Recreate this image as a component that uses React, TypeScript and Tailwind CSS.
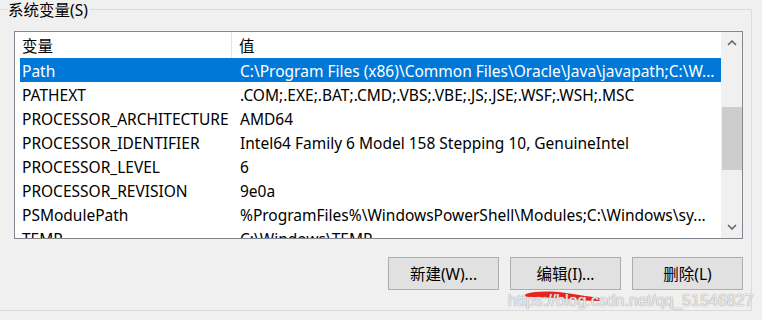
const rows: [string, string][] = [
  ["Path", "C:\\Program Files (x86)\\Common Files\\Oracle\\Java\\javapath;C:\\W..."],
  ["PATHEXT", ".COM;.EXE;.BAT;.CMD;.VBS;.VBE;.JS;.JSE;.WSF;.WSH;.MSC"],
  ["PROCESSOR_ARCHITECTURE", "AMD64"],
  ["PROCESSOR_IDENTIFIER", "Intel64 Family 6 Model 158 Stepping 10, GenuineIntel"],
  ["PROCESSOR_LEVEL", "6"],
  ["PROCESSOR_REVISION", "9e0a"],
  ["PSModulePath", "%ProgramFiles%\\WindowsPowerShell\\Modules;C:\\Windows\\sy..."],
  ["TEMP", "C:\\Windows\\TEMP"],
];

const font = { fontFamily: '"Noto Sans", "Noto Sans CJK SC", sans-serif' };

const Chevron = ({ up }: { up?: boolean }) => (
  <svg width="10" height="6" viewBox="0 0 10 6" className="text-[#606060]">
    <path d={up ? "M1 5 L5 1 L9 5" : "M1 1 L5 5 L9 1"} fill="none" stroke="currentColor" strokeWidth="1.5" />
  </svg>
);

const Button = ({ label }: { label: string }) => (
  <div className="w-[111px] h-[33px] pt-[3px] flex items-center justify-center bg-[#e1e1e1] border border-[#adadad] text-[15.5px] text-black">
    {label}
  </div>
);

export default function App() {
  return (
    <div className="relative w-[762px] h-[320px] bg-[#f0f0f0] overflow-hidden" style={font}>
      <div className="relative mt-[9px] ml-[-10px] w-[762px] h-[302px] border border-[#dcdcdc]">
        <span className="absolute left-[16px] top-[-9px] bg-[#f0f0f0] pl-px pr-[2px] text-[15.5px] leading-[19px] text-black">
          系统变量(S)
        </span>

        <div className="mt-[21px] ml-[23px] w-[729px] h-[208px] border border-[#828790] bg-white flex overflow-hidden">
          <div className="flex-1 flex flex-col overflow-hidden">
            <div className="h-[26px] shrink-0 flex items-center text-[15.5px] text-black">
              <div className="w-[217px] h-full pl-[7px] pt-[3px] flex items-center border-r border-[#e5e5e5]">变量</div>
              <div className="pl-[7px] pt-[3px]">值</div>
            </div>
            {rows.map(([name, value], i) => (
              <div
                key={name}
                className={
                  "h-[24px] shrink-0 flex items-center pt-[4px] ml-[5px] text-[15.5px] whitespace-nowrap " +
                  (i === 0 ? "bg-[#0078d7] text-white" : "text-black")
                }
              >
                <div className="w-[220px] pl-[2px] shrink-0">{name}</div>
                <div className="overflow-hidden">{value}</div>
              </div>
            ))}
          </div>
          <div className="w-[21px] shrink-0 bg-[#f0f0f0] flex flex-col items-center">
            <div className="h-[22px] flex items-center justify-center"><Chevron up /></div>
            <div className="mt-[53px] w-[20px] h-[63px] bg-[#cdcdcd]" />
            <div className="flex-1" />
            <div className="h-[22px] flex items-center justify-center"><Chevron /></div>
          </div>
        </div>

        <div className="mt-[18px] ml-[397px] flex gap-[11px]">
          <Button label="新建(W)..." />
          <Button label="编辑(I)..." />
          <Button label="删除(L)" />
        </div>
      </div>

      <svg className="absolute left-[522px] top-[288px]" width="84" height="16" viewBox="0 0 84 16">
        <path
          d="M4 6 C14 3 28 3 44 5 C58 7 70 9 78 10 C80 11 79 13 76 13 C66 13 56 12 46 11 C34 10 20 9 8 9 C3 9 2 7 4 6 Z"
          fill="#e8231d"
        />
      </svg>
      <span
        className="absolute left-[508px] top-[290px] text-[16px] leading-[22px] text-white/80 whitespace-nowrap"
        style={{ fontFamily: '"Liberation Sans", sans-serif', textShadow: "0 0 1px #9a9a9a, 0 0 1px #9a9a9a" }}
      >
        https://blog.csdn.net/qq_51546827
      </span>
    </div>
  );
}
